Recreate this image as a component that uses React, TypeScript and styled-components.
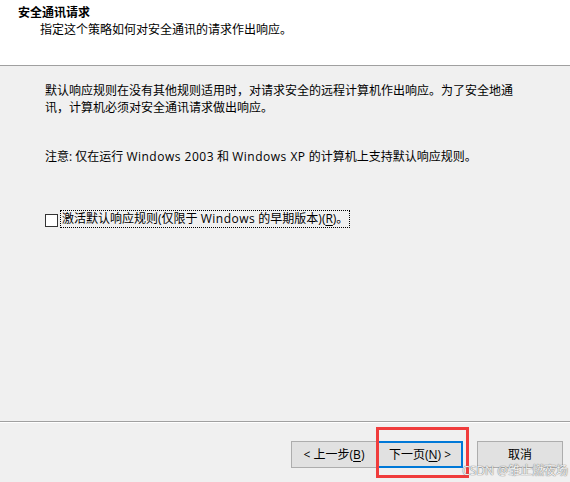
import { createGlobalStyle, styled } from 'styled-components';

const GlobalStyle = createGlobalStyle`
  html, body {
    margin: 0;
    padding: 0;
    background: #f0f0f0;
  }
  body {
    font-family: "Open Sans", "Noto Sans CJK SC", "Liberation Sans", sans-serif;
    font-size: 12px;
    color: #000;
  }
`;

const Wizard = styled.div`
  position: relative;
  display: flex;
  flex-direction: column;
  width: 570px;
  height: 482px;
  overflow: hidden;
  background: #f0f0f0;
`;

const Header = styled.div`
  height: 66px;
  box-sizing: border-box;
  padding: 4px 0 0 18px;
  background: #fff;
  border-bottom: 1px solid #a0a0a0;
`;

const Title = styled.div`
  font-weight: bold;
  line-height: 17px;
`;

const Subtitle = styled.div`
  padding-left: 22px;
  line-height: 17px;
`;

const Body = styled.div`
  flex: 1;
  padding: 16px 0 0 45px;
`;

const Paragraph = styled.p<{ $gap: number }>`
  margin: 0 0 ${(p) => p.$gap}px;
  line-height: 17px;
  width: 470px;
`;

// product names are set a touch looser, like the system UI font
const Latin = styled.span`
  letter-spacing: 0.5px;
`;

const CheckRow = styled.label`
  display: flex;
  align-items: center;
  gap: 2px;
  height: 18px;
`;

const Box = styled.span`
  width: 11px;
  height: 11px;
  border: 1px solid #333;
  background: #fff;
  margin-top: 2px;
`;

const FocusLabel = styled.span`
  border: 1px dotted #000;
  padding: 0 1px;
  line-height: 16px;
`;

const Key = styled.span`
  text-decoration: underline;
  text-underline-offset: 2px;
`;

const Footer = styled.div`
  height: 61px;
  box-sizing: border-box;
  border-top: 1px solid #a0a0a0;
  box-shadow: inset 0 1px 0 #fff;
  display: flex;
  justify-content: flex-end;
  align-items: flex-start;
  padding: 19px 7px 0 0;
`;

const Button = styled.button<{ $default?: boolean; $gapAfter?: number }>`
  width: 86px;
  height: 27px;
  margin-right: ${(p) => p.$gapAfter ?? 0}px;
  box-sizing: border-box;
  background: #e1e1e1;
  border: ${(p) => (p.$default ? '2px solid #0078d7' : '1px solid #adadad')};
  font-family: inherit;
  font-size: 12px;
  line-height: 16px;
  color: #000;
  padding: 0;
  white-space: nowrap;
`;

const Highlight = styled.div`
  position: absolute;
  left: 376px;
  top: 427px;
  width: 93px;
  height: 51px;
  box-sizing: border-box;
  border: 3px solid #f03c3c;
`;

// blog watermark stamped over the lower-right corner
const Watermark = styled.div`
  position: absolute;
  right: 2px;
  bottom: 5px;
  font-size: 12px;
  line-height: 12px;
  color: rgba(255, 255, 255, 0.9);
  text-shadow: 0 0 1px #777, 0 0 1px #777;
  white-space: nowrap;
`;

export default function App() {
  return (
    <>
      <GlobalStyle />
      <Wizard>
        <Header>
          <Title>安全通讯请求</Title>
          <Subtitle>指定这个策略如何对安全通讯的请求作出响应。</Subtitle>
        </Header>
        <Body>
          <Paragraph $gap={32}>
            默认响应规则在没有其他规则适用时，对请求安全的远程计算机作出响应。为了安全地通
            <br />
            讯，计算机必须对安全通讯请求做出响应。
          </Paragraph>
          <Paragraph $gap={45}>
            注意: 仅在运行 <Latin>Windows 2003</Latin> 和 <Latin>Windows XP</Latin> 的计算机上支持默认响应规则。
          </Paragraph>
          <CheckRow>
            <Box />
            <FocusLabel>
              激活默认响应规则(仅限于 <Latin>Windows</Latin> 的早期版本)(<Key>R</Key>)。
            </FocusLabel>
          </CheckRow>
        </Body>
        <Footer>
          <Button>
            &lt; 上一步(<Key>B</Key>)
          </Button>
          <Button $default $gapAfter={14}>
            下一页(<Key>N</Key>) &gt;
          </Button>
          <Button>取消</Button>
        </Footer>
        <Highlight />
        <Watermark>CSDN @雏止燃夜场</Watermark>
      </Wizard>
    </>
  );
}
